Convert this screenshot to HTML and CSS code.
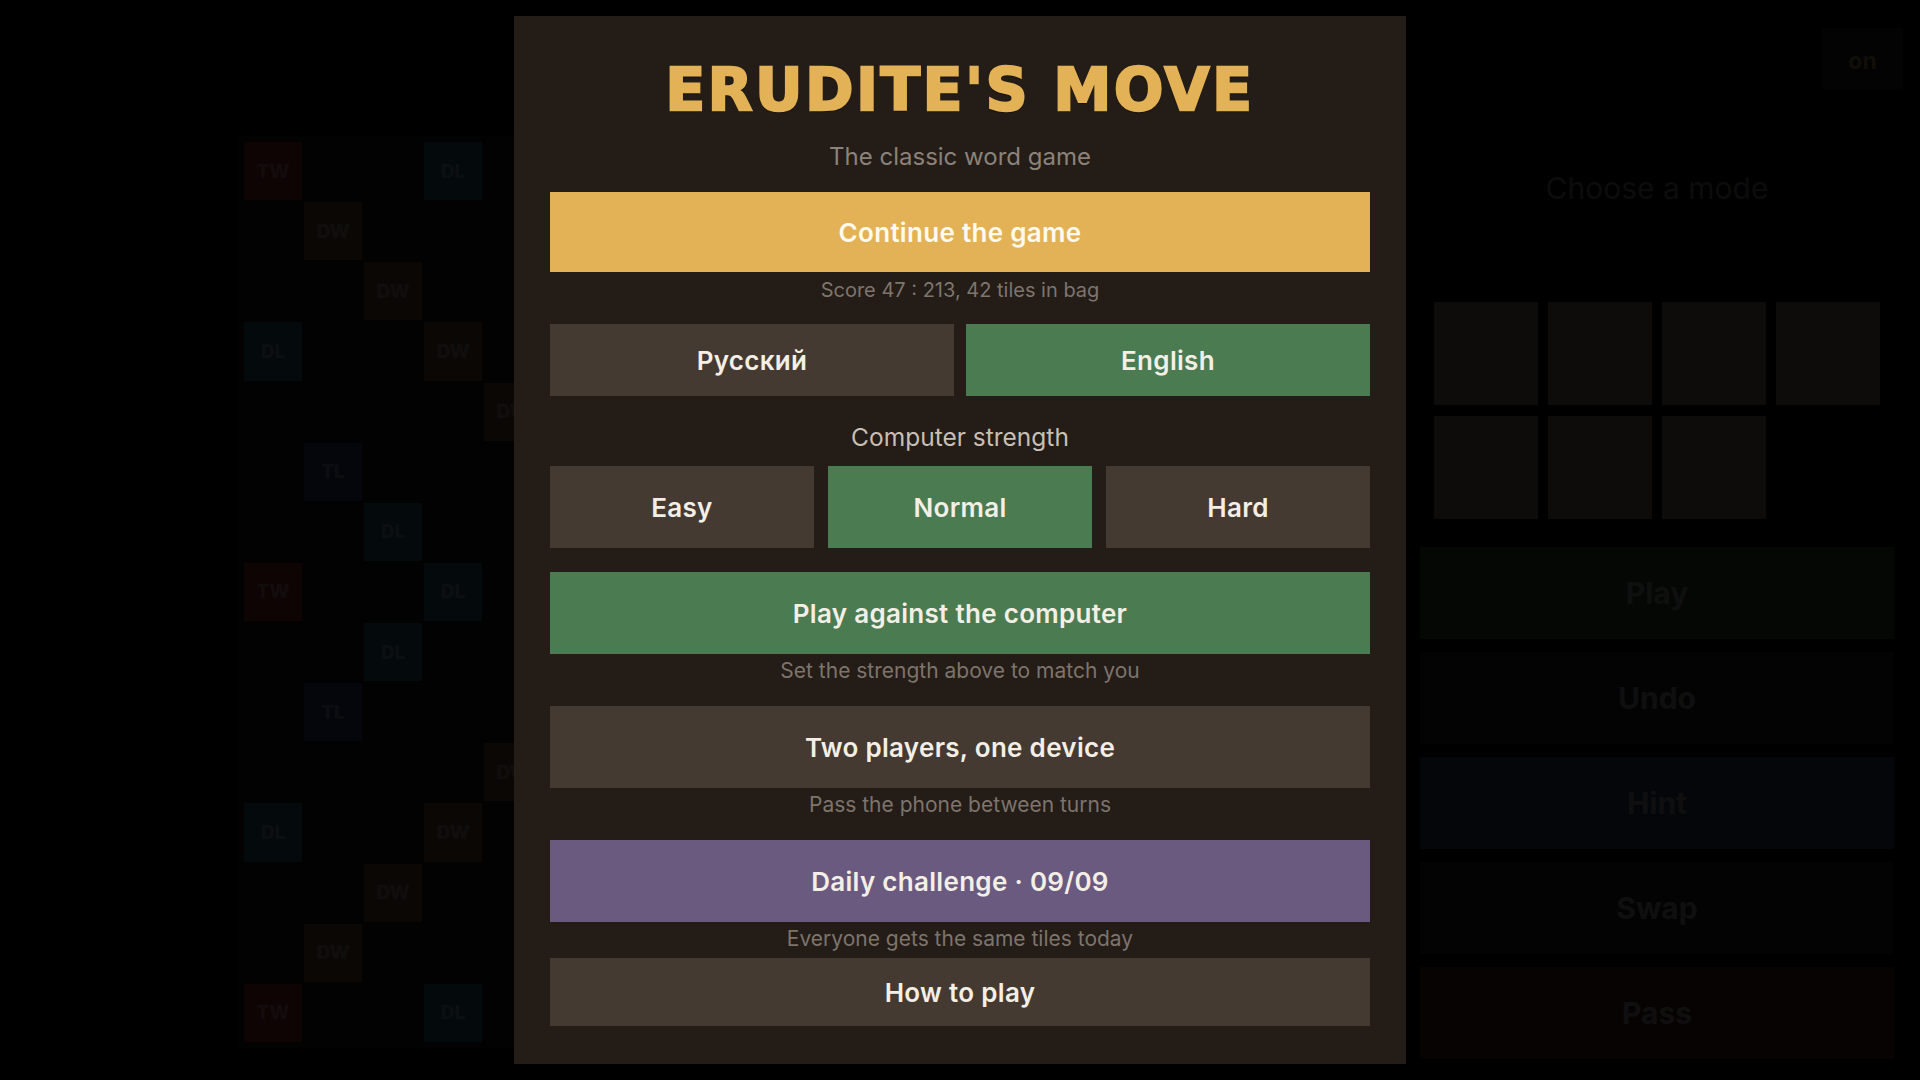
FILE: index.html
```html
<!DOCTYPE html>
<html lang="en">
<head>
  <meta charset="UTF-8">
  <meta name="viewport" content="width=device-width, initial-scale=1.0">
  <title>Erudite's Move</title>
  <link rel="stylesheet" href="styles.css">
</head>
<body>
  <div class="app">
    <div class="board-wrap">
      <div class="board" id="board"></div>
    </div>

    <div class="side">
      <h2 class="side-title">Choose a mode</h2>
      <div class="rack">
        <div class="rack-tile"></div>
        <div class="rack-tile"></div>
        <div class="rack-tile"></div>
        <div class="rack-tile"></div>
        <div class="rack-tile"></div>
        <div class="rack-tile"></div>
        <div class="rack-tile"></div>
      </div>
      <div class="actions">
        <button class="act act-play">Play</button>
        <button class="act">Undo</button>
        <button class="act act-hint">Hint</button>
        <button class="act">Swap</button>
        <button class="act act-pass">Pass</button>
      </div>
    </div>

    <button class="sound-btn">on</button>
  </div>

  <!-- стартовое окно -->
  <div class="overlay">
    <div class="modal">
      <h1 class="title">ERUDITE'S MOVE</h1>
      <p class="subtitle">The classic word game</p>

      <button class="btn btn-gold btn-continue">Continue the game</button>
      <p class="score">Score 47 : 213, 42 tiles in bag</p>

      <div class="row row-lang">
        <button class="btn btn-dark">Русский</button>
        <button class="btn btn-green">English</button>
      </div>

      <p class="label">Computer strength</p>
      <div class="row row-level">
        <button class="btn btn-dark">Easy</button>
        <button class="btn btn-green">Normal</button>
        <button class="btn btn-dark">Hard</button>
      </div>

      <div class="mode mode-first">
        <button class="btn btn-green">Play against the computer</button>
        <p class="note">Set the strength above to match you</p>
      </div>
      <div class="mode">
        <button class="btn btn-dark">Two players, one device</button>
        <p class="note">Pass the phone between turns</p>
      </div>
      <div class="mode">
        <button class="btn btn-purple">Daily challenge · 09/09</button>
        <p class="note">Everyone gets the same tiles today</p>
      </div>

      <button class="btn btn-dark btn-help">How to play</button>
    </div>
  </div>

  <script>
    // Клетки с бонусами (строка, столбец)
    const TW = ['0,0','0,7','0,14','7,0','7,14','14,0','14,7','14,14'];
    const DW = ['1,1','2,2','3,3','4,4','1,13','2,12','3,11','4,10','13,1','12,2','11,3','10,4',
                '13,13','12,12','11,11','10,10'];
    const TL = ['1,5','1,9','5,1','5,5','5,9','5,13','9,1','9,5','9,9','9,13','13,5','13,9'];
    const DL = ['0,3','0,11','2,6','2,8','3,0','3,7','3,14','6,2','6,6','6,8','6,12','7,3','7,11',
                '8,2','8,6','8,8','8,12','11,0','11,7','11,14','12,6','12,8','14,3','14,11'];

    const board = document.getElementById('board');
    let html = '';
    for (let r = 0; r < 15; r++) {
      for (let c = 0; c < 15; c++) {
        const key = r + ',' + c;
        if (TW.includes(key)) html += '<div class="cell tw">TW</div>';
        else if (DW.includes(key)) html += '<div class="cell dw">DW</div>';
        else if (TL.includes(key)) html += '<div class="cell tl">TL</div>';
        else if (DL.includes(key)) html += '<div class="cell dl">DL</div>';
        else if (key === '7,7') html += '<div class="cell dw">★</div>';
        else html += '<div class="cell"></div>';
      }
    }
    board.innerHTML = html;
  </script>
</body>
</html>
```

FILE: styles.css
```css
body {
  margin: 0;
  background-color: #000;
  font-family: Inter, "Noto Sans", sans-serif;
  height: 100vh;
  overflow: hidden;
}

p {
  margin: 0;
}

button {
  font: inherit;
  border: none;
  cursor: pointer;
}

/* ---- игровое поле ---- */
.app {
  display: grid;
  grid-template-columns: 910px 474px;
  column-gap: 272px;
  padding-left: 238px;
  height: 100vh;
}

.board-wrap {
  padding-top: 136px;
}

.board {
  display: grid;
  grid-template-columns: repeat(15, 1fr);
  grid-template-rows: repeat(15, 1fr);
  gap: 2px;
  padding: 6px;
  width: 910px;
  height: 912px;
  box-sizing: border-box;
  background-color: #1a1a1a;
}

.cell {
  background-color: #161616;
  display: flex;
  align-items: center;
  justify-content: center;
  font-size: 19px;
  font-weight: 800;
  color: rgba(255, 255, 255, 0.4);
}

.cell.tw { background-color: #8a2a2a; }
.cell.dw { background-color: #6e4a36; }
.cell.dl { background-color: #2a5a78; }
.cell.tl { background-color: #303c7a; }

/* ---- правая панель ---- */
.side {
  padding-top: 168px;
}

.side-title {
  margin: 0;
  text-align: center;
  font-size: 30px;
  font-weight: 400;
  line-height: 40px;
  color: #7a7a7a;
}

.rack {
  display: grid;
  grid-template-columns: repeat(4, 104px);
  grid-auto-rows: 103px;
  column-gap: 10px;
  row-gap: 11px;
  padding: 0 14px;
  margin-top: 94px;
}

.rack-tile {
  background-color: #867a64;
}

.actions {
  display: flex;
  flex-direction: column;
  gap: 13px;
  margin-top: 28px;
}

.act {
  height: 92px;
  background-color: #222;
  color: #949494;
  font-size: 30px;
  font-weight: 700;
}

.act-play { background-color: #2e4a30; }
.act-hint { background-color: #323c64; }
.act-pass { background-color: #4e2020; }

.sound-btn {
  position: absolute;
  top: 28px;
  right: 17px;
  width: 81px;
  height: 62px;
  padding-top: 4px;
  background-color: #1e1e1e;
  color: #a88c66;
  font-size: 23px;
  font-weight: 700;
}

/* ---- стартовое окно ---- */
.overlay {
  position: fixed;
  inset: 0;
  background-color: rgba(0, 0, 0, 0.9);
  display: flex;
  align-items: center;
  justify-content: center;
}

.modal {
  width: 892px;
  box-sizing: border-box;
  padding: 38px 36px;
  background-color: #241c17;
  display: flex;
  flex-direction: column;
  text-align: center;
}

.title {
  margin: 0;
  font-family: "DejaVu Sans", sans-serif;
  font-weight: 700;
  font-size: 58px;
  line-height: 72px;
  letter-spacing: 2.8px;
  color: #e3b256;
  -webkit-text-stroke: 2.4px #e3b256;
  text-shadow: 0 2px 1px rgba(0, 0, 0, 0.5);
}

.subtitle {
  margin-top: 16px;
  font-size: 24px;
  line-height: 30px;
  color: #8b8279;
}

.btn {
  color: #f4efe6;
  font-size: 26px;
  font-weight: 600;
  letter-spacing: 0.3px;
  height: 82px;
  width: 100%;
}

.btn-gold { background-color: #e3b256; color: #fffaf0; }
.btn-dark { background-color: #453a31; }
.btn-green { background-color: #4b7b50; }
.btn-purple { background-color: #6a5a7f; }

.btn-continue {
  margin-top: 20px;
  height: 80px;
}

.score {
  margin-top: 6px;
  font-size: 20px;
  line-height: 24px;
  color: #7e756d;
}

.row {
  display: flex;
}

.row .btn {
  flex: 1;
}

.row-lang {
  margin-top: 22px;
  gap: 12px;
}

.row-lang .btn {
  height: 72px;
}

.label {
  margin-top: 26px;
  font-size: 24.5px;
  line-height: 30px;
  color: #c8bfb5;
}

.row-level {
  margin-top: 14px;
  gap: 14px;
}

.mode {
  margin-top: 23px;
}

.mode-first {
  margin-top: 24px;
}

.note {
  margin-top: 5px;
  font-size: 21px;
  line-height: 24px;
  color: #7d746c;
}

.btn-help {
  margin-top: 7px;
  height: 68px;
}
```
